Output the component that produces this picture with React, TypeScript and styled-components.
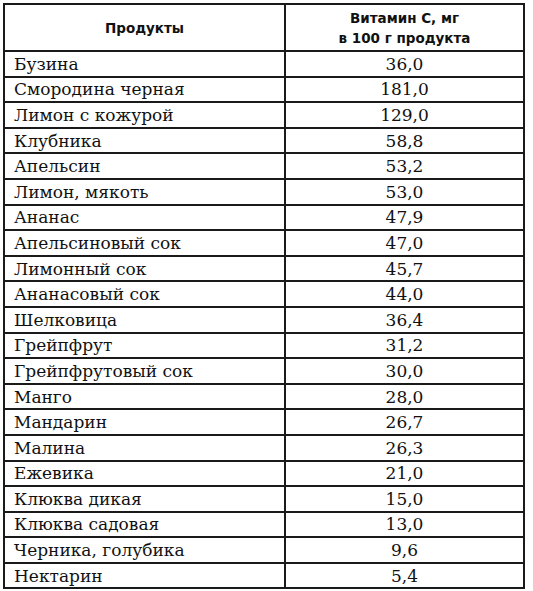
import React from 'react';
import styled, {createGlobalStyle} from 'styled-components';

const data: [string, string][] = [
	['Бузина', '36,0'],
	['Смородина черная', '181,0'],
	['Лимон с кожурой', '129,0'],
	['Клубника', '58,8'],
	['Апельсин', '53,2'],
	['Лимон, мякоть', '53,0'],
	['Ананас', '47,9'],
	['Апельсиновый сок', '47,0'],
	['Лимонный сок', '45,7'],
	['Ананасовый сок', '44,0'],
	['Шелковица', '36,4'],
	['Грейпфрут', '31,2'],
	['Грейпфрутовый сок', '30,0'],
	['Манго', '28,0'],
	['Мандарин', '26,7'],
	['Малина', '26,3'],
	['Ежевика', '21,0'],
	['Клюква дикая', '15,0'],
	['Клюква садовая', '13,0'],
	['Черника, голубика', '9,6'],
	['Нектарин', '5,4'],
];

const GlobalStyle = createGlobalStyle`
	body {
		margin: 0;
		background: #fff;
	}
`;

function App() {
	return (
		<>
			<GlobalStyle />
			<Table>
				<colgroup>
					<col style={{width: 281}} />
					<col style={{width: 239}} />
				</colgroup>
				<thead>
					<tr>
						<HeadCell>Продукты</HeadCell>
						<HeadCell>
							Витамин С, мг
							<br />в 100 г продукта
						</HeadCell>
					</tr>
				</thead>
				<tbody>
					{data.map(([name, value], i) => (
						<tr key={i}>
							<NameCell>{name}</NameCell>
							<ValueCell>{value}</ValueCell>
						</tr>
					))}
				</tbody>
			</Table>
		</>
	);
}

export default App;

const Table = styled.table`
	margin: 3px 0 0 3px;
	width: 520px;
	border-collapse: collapse;
	table-layout: fixed;
	border: 2px solid #1a1a1a;
`;

const HeadCell = styled.th`
	height: 45px;
	padding: 0;
	border: 2px solid #1a1a1a;
	font-family: 'DejaVu Sans', Verdana, sans-serif;
	font-weight: bold;
	font-size: 13.5px;
	line-height: 20px;
	color: #111;
	text-align: center;
	vertical-align: middle;
`;

const Cell = styled.td`
	height: 25.6px;
	padding: 0;
	border: 2px solid #1a1a1a;
	font-family: 'DejaVu Serif', 'Liberation Serif', serif;
	font-size: 17px;
	color: #111;
	vertical-align: middle;
	box-sizing: border-box;
`;

const NameCell = styled(Cell)`
	padding-left: 9px;
	text-align: left;
`;

const ValueCell = styled(Cell)`
	text-align: center;
`;
